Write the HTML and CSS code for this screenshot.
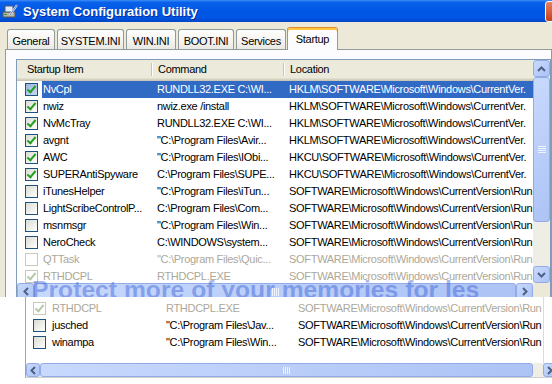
FILE: index.html
```html
<!DOCTYPE html>
<html lang="en">
<head>
  <meta charset="UTF-8" />
  <title>System Configuration Utility</title>
  <link rel="stylesheet" href="styles.css">
</head>
<body>
  <div class="window">
    <div class="titlebar">
      <svg class="app-icon" width="17" height="16" viewBox="0 0 17 16">
        <rect x="1" y="9" width="12" height="5" fill="#b9b6a8" stroke="#5d5a50"/>
        <rect x="3" y="3" width="8" height="6" fill="#dfe9f7" stroke="#4a5a7a"/>
        <path d="M8 12 L15 2" stroke="#fff" stroke-width="2"/>
        <path d="M8 12 L15 2" stroke="#2b4fa8" stroke-width="0.8"/>
        <rect x="2" y="11" width="3" height="1" fill="#3c9a3c"/>
      </svg>
      <span class="title">System Configuration Utility</span>
      <span class="close"></span>
    </div>

    <div class="tabs">
      <span class="tab w-general">General</span>
      <span class="tab w-system">SYSTEM.INI</span>
      <span class="tab w-win">WIN.INI</span>
      <span class="tab w-boot">BOOT.INI</span>
      <span class="tab w-services">Services</span>
      <span class="tab active w-startup">Startup</span>
    </div>

    <div class="panel">
      <div class="listview">
        <div class="lv-content">
          <div class="lv-header">
            <span class="h1">Startup Item</span>
            <span class="h2">Command</span>
            <span class="h3">Location</span>
          </div>

          <div class="row">
            <span class="cb on sel-cb"></span>
            <div class="cells sel"><span class="c1">NvCpl</span><span class="c2">RUNDLL32.EXE C:\WI...</span><span class="c3">HKLM\SOFTWARE\Microsoft\Windows\CurrentVer.</span></div>
          </div>
          <div class="row">
            <span class="cb on"></span>
            <div class="cells"><span class="c1">nwiz</span><span class="c2">nwiz.exe /install</span><span class="c3">HKLM\SOFTWARE\Microsoft\Windows\CurrentVer.</span></div>
          </div>
          <div class="row">
            <span class="cb on"></span>
            <div class="cells"><span class="c1">NvMcTray</span><span class="c2">RUNDLL32.EXE C:\WI...</span><span class="c3">HKLM\SOFTWARE\Microsoft\Windows\CurrentVer.</span></div>
          </div>
          <div class="row">
            <span class="cb on"></span>
            <div class="cells"><span class="c1">avgnt</span><span class="c2">"C:\Program Files\Avir...</span><span class="c3">HKLM\SOFTWARE\Microsoft\Windows\CurrentVer.</span></div>
          </div>
          <div class="row">
            <span class="cb on"></span>
            <div class="cells"><span class="c1">AWC</span><span class="c2">"C:\Program Files\IObi...</span><span class="c3">HKCU\SOFTWARE\Microsoft\Windows\CurrentVer.</span></div>
          </div>
          <div class="row">
            <span class="cb on"></span>
            <div class="cells"><span class="c1">SUPERAntiSpyware</span><span class="c2">C:\Program Files\SUPE...</span><span class="c3">HKCU\SOFTWARE\Microsoft\Windows\CurrentVer.</span></div>
          </div>
          <div class="row">
            <span class="cb"></span>
            <div class="cells"><span class="c1">iTunesHelper</span><span class="c2">"C:\Program Files\iTun...</span><span class="c3">SOFTWARE\Microsoft\Windows\CurrentVersion\Run</span></div>
          </div>
          <div class="row">
            <span class="cb"></span>
            <div class="cells"><span class="c1">LightScribeControlP...</span><span class="c2">C:\Program Files\Com...</span><span class="c3">SOFTWARE\Microsoft\Windows\CurrentVersion\Run</span></div>
          </div>
          <div class="row">
            <span class="cb"></span>
            <div class="cells"><span class="c1">msnmsgr</span><span class="c2">"C:\Program Files\Win...</span><span class="c3">SOFTWARE\Microsoft\Windows\CurrentVersion\Run</span></div>
          </div>
          <div class="row">
            <span class="cb"></span>
            <div class="cells"><span class="c1">NeroCheck</span><span class="c2">C:\WINDOWS\system...</span><span class="c3">SOFTWARE\Microsoft\Windows\CurrentVersion\Run</span></div>
          </div>
          <div class="row off">
            <span class="cb"></span>
            <div class="cells"><span class="c1">QTTask</span><span class="c2">"C:\Program Files\Quic...</span><span class="c3">SOFTWARE\Microsoft\Windows\CurrentVersion\Run</span></div>
          </div>
          <div class="row off">
            <span class="cb on"></span>
            <div class="cells"><span class="c1">RTHDCPL</span><span class="c2">RTHDCPL.EXE</span><span class="c3">SOFTWARE\Microsoft\Windows\CurrentVersion\Run</span></div>
          </div>
        </div>

        <div class="vscroll">
          <div class="sbtn"><svg width="9" height="6" viewBox="0 0 9 6"><path d="M1 5 L4.5 1.5 L8 5" stroke="#4d6185" stroke-width="2" fill="none"/></svg></div>
          <div class="sthumb"><svg width="8" height="7" viewBox="0 0 8 7"><path d="M0 0.5H8M0 2.5H8M0 4.5H8M0 6.5H8" stroke="#eef3fe" stroke-width="1"/></svg></div>
          <div class="strack"></div>
          <div class="sbtn"><svg width="9" height="6" viewBox="0 0 9 6"><path d="M1 1 L4.5 4.5 L8 1" stroke="#4d6185" stroke-width="2" fill="none"/></svg></div>
        </div>

        <div class="hbar">
          <div class="sbtn"><svg width="6" height="9" viewBox="0 0 6 9"><path d="M5 1 L1.5 4.5 L5 8" stroke="#4d6185" stroke-width="2" fill="none"/></svg></div>
          <div class="sthumb"><svg width="7" height="8" viewBox="0 0 7 8"><path d="M0.5 0V8M2.5 0V8M4.5 0V8M6.5 0V8" stroke="#eef3fe" stroke-width="1"/></svg></div>
          <div class="sbtn"><svg width="6" height="9" viewBox="0 0 6 9"><path d="M1 1 L4.5 4.5 L1 8" stroke="#4d6185" stroke-width="2" fill="none"/></svg></div>
        </div>
        <div class="corner"></div>
      </div>
    </div>

    <div class="watermark">Protect more of your memories for les</div>
  </div>

  <div class="lower">
    <div class="lower-list">
      <div class="lower-rows">
        <div class="row off">
          <span class="cb on"></span>
          <div class="cells"><span class="c1">RTHDCPL</span><span class="c2">RTHDCPL.EXE</span><span class="c3">SOFTWARE\Microsoft\Windows\CurrentVersion\Run</span></div>
        </div>
        <div class="row">
          <span class="cb"></span>
          <div class="cells"><span class="c1">jusched</span><span class="c2">"C:\Program Files\Jav...</span><span class="c3">SOFTWARE\Microsoft\Windows\CurrentVersion\Run</span></div>
        </div>
        <div class="row">
          <span class="cb"></span>
          <div class="cells"><span class="c1">winampa</span><span class="c2">"C:\Program Files\Win...</span><span class="c3">SOFTWARE\Microsoft\Windows\CurrentVersion\Run</span></div>
        </div>
      </div>
      <div class="lower-side"></div>
      <div class="hbar small">
        <div class="sbtn"><svg width="6" height="9" viewBox="0 0 6 9"><path d="M5 1 L1.5 4.5 L5 8" stroke="#4d6185" stroke-width="2" fill="none"/></svg></div>
        <div class="sthumb"><svg width="7" height="7" viewBox="0 0 7 7"><path d="M0.5 0V7M2.5 0V7M4.5 0V7M6.5 0V7" stroke="#eef3fe" stroke-width="1"/></svg></div>
        <div class="strack"></div>
        <div class="sbtn"><svg width="6" height="9" viewBox="0 0 6 9"><path d="M1 1 L4.5 4.5 L1 8" stroke="#4d6185" stroke-width="2" fill="none"/></svg></div>
      </div>
    </div>
  </div>
</body>
</html>
```

FILE: styles.css
```css
body {
  margin: 0;
  width: 552px;
  height: 384px;
  overflow: hidden;
  background: #fff;
  font-family: 'Liberation Sans', Arial, sans-serif;
  font-size: 11px;
  letter-spacing: -0.3px;
  color: #000;
}
.window {
  position: relative;
  height: 297px;
  overflow: hidden;
  background: #ece9d8;
}

/* title bar */
.titlebar {
  height: 22px;
  display: flex;
  align-items: center;
  background: linear-gradient(to bottom, #3d8ef8 0%, #0a62ea 10%, #0058e6 45%, #0055e5 80%, #0046c6 100%);
}
.app-icon {
  flex: none;
  margin: 0 4px 0 2px;
}
.title {
  flex: 1;
  font-weight: bold;
  font-size: 13px;
  letter-spacing: 0;
  color: #fff;
  text-shadow: 1px 1px 0 #0a2a9a;
}
.close {
  flex: none;
  width: 21px;
  height: 21px;
  margin-right: -14px;
  box-sizing: border-box;
  border: 1px solid #fff;
  border-radius: 3px;
  background: linear-gradient(#e8825f, #c4401c);
}

/* tabs */
.tabs {
  height: 27px;
  display: flex;
  align-items: flex-end;
  gap: 2px;
  padding-left: 7px;
}
.tab {
  box-sizing: border-box;
  height: 20px;
  padding-top: 3px;
  line-height: 16px;
  text-align: center;
  border: 1px solid #919b9c;
  border-bottom: none;
  border-radius: 3px 3px 0 0;
  background: linear-gradient(#fefefe, #f4f3ee 60%, #e9e8e1);
}
.tab.active {
  position: relative;
  height: 23px;
  margin-left: -1px;
  margin-bottom: -1px;
  padding-top: 3px;
  border-top: 1px solid #e68b2c;
  background: #fcfcfe;
  box-shadow: inset 0 2px 0 #ffc83c;
}
.w-general { width: 48px; }
.w-system { width: 67px; }
.w-win { width: 50px; }
.w-boot { width: 56px; }
.w-services { width: 50px; }
.w-startup { width: 51px; }

/* tab panel */
.panel {
  margin-left: 5px;
  height: 300px;
  border: 1px solid #919b9c;
  background: #fcfcfe;
  padding: 9px 0 0 10px;
}
.listview {
  display: grid;
  grid-template-columns: 516px 17px;
  grid-template-rows: 223px 17px;
  border: 1px solid #7f9db9;
  background: #fff;
}
.lv-content {
  overflow: hidden;
}
.lv-header {
  display: flex;
  height: 21px;
  line-height: 19px;
  background: #ebeadb;
  box-shadow: inset 0 -1px #cbc7b8, inset 0 -2px #d6d2c2, inset 0 -3px #e2decd;
}
.h1 { width: 134px; padding-left: 10px; box-sizing: border-box; }
.h2 { width: 132px; padding-left: 7px; box-sizing: border-box; }
.h3 { flex: 1; padding-left: 7px; }
.h2, .h3 {
  background: linear-gradient(to right, #c7c5b2 1px, #fff 1px) left 3px / 2px 13px no-repeat;
}

/* rows */
.row {
  display: flex;
  align-items: center;
  height: 17px;
  line-height: 17px;
  white-space: nowrap;
}
.row.off { color: #aca899; }
.cells {
  flex: 1;
  min-width: 0;
  display: flex;
  margin-left: 4px;
  overflow: hidden;
}
.cells.sel {
  background: #316ac5;
  color: #fff;
}
.c1 { flex: none; width: 109px; padding-left: 1px; box-sizing: border-box; overflow: hidden; }
.c2 { flex: none; width: 132px; padding-left: 6px; box-sizing: border-box; overflow: hidden; }
.c3 { flex: 1; min-width: 0; padding-left: 6px; overflow: hidden; }

.cb {
  position: relative;
  flex: none;
  width: 13px;
  height: 13px;
  margin-left: 8px;
  box-sizing: border-box;
  border: 1px solid #1c5180;
  background: linear-gradient(135deg, #dcdcd5, #f4f4f0 70%, #fff);
}
.cb.on::after {
  content: "";
  position: absolute;
  left: 3px;
  top: 0px;
  width: 3px;
  height: 7px;
  border: solid #21a121;
  border-width: 0 2px 2px 0;
  transform: rotate(40deg);
}
.cb.sel-cb {
  background: linear-gradient(135deg, #9cb6e0, #c7d7f0);
}
.off .cb {
  border-color: #cac8bb;
  background: #fff;
}
.off .cb.on::after {
  border-color: #b5c9a9;
}

/* scrollbars */
.vscroll {
  display: grid;
  grid-template-rows: 17px 145px 1fr 17px;
  background: #eeede6;
}
.hbar {
  display: grid;
  grid-template-columns: 17px 1fr 17px;
  background: #eeede6;
}
.hbar.small {
  grid-column: 1 / -1;
  grid-template-columns: 14px 493px 10px 14px;
}
.sbtn,
.sthumb {
  display: flex;
  align-items: center;
  justify-content: center;
  box-sizing: border-box;
  border: 1px solid #93ace6;
  border-radius: 3px;
  background: linear-gradient(135deg, #c8d9fd, #acc3f5);
}
.corner {
  background: #ece9d8;
}

.watermark {
  position: absolute;
  left: 32px;
  top: 275px;
  font-size: 24.7px;
  line-height: 30px;
  font-weight: bold;
  letter-spacing: 0;
  white-space: nowrap;
  color: rgba(45, 85, 210, 0.42);
}

/* lower piece */
.lower {
  height: 87px;
  padding-left: 25px;
  background: #fff;
  overflow: hidden;
}
.lower-list {
  width: 540px;
  height: 80px;
  display: grid;
  grid-template-columns: 517px 1fr;
  grid-template-rows: 66px 14px;
  border-left: 1px solid #a5a5a5;
  border-bottom: 1px solid #d0d0d0;
}
.lower-rows {
  padding-top: 3px;
  overflow: hidden;
}
.lower-rows .cb { margin-left: 7px; }
.lower-rows .cells { margin-left: 5px; }
.lower-side {
  border-left: 1px solid #dcdcdc;
}
```
